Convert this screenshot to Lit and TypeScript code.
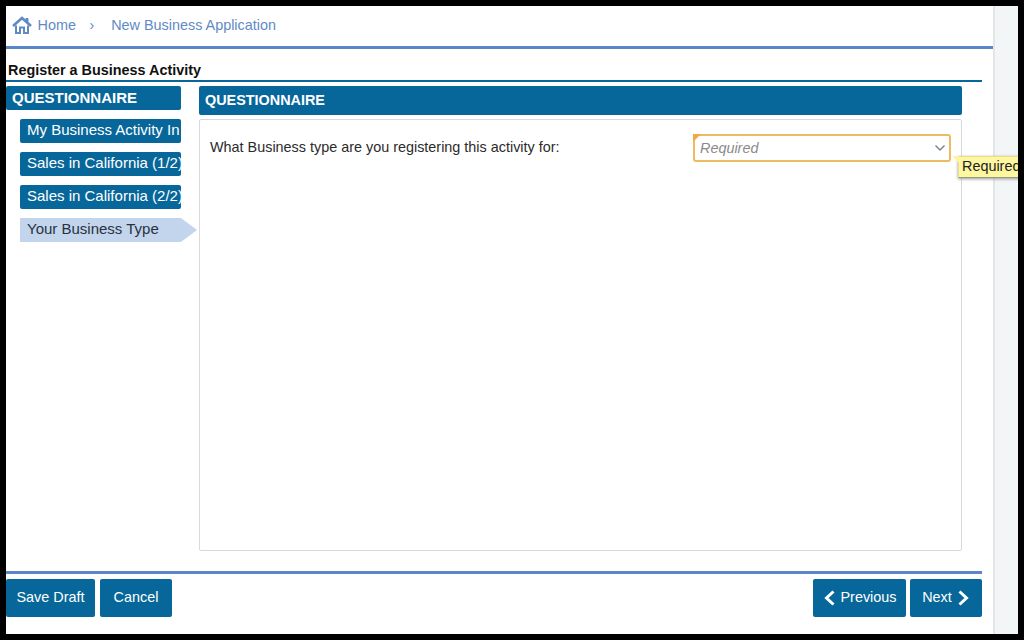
import { LitElement, html, css } from "lit";
import { customElement } from "lit/decorators.js";

@customElement("app-root")
export class AppRoot extends LitElement {
  static styles = css`
    :host { display: block; width: 1024px; height: 640px; background: #000; padding: 6px; box-sizing: border-box; font-family: "Liberation Sans", Arial, sans-serif; font-size: 14.4px; color: #222; }
    .frame { display: flex; width: 1012px; height: 628px; overflow: hidden; background: #fff; position: relative; }
    .main { width: 987px; flex: none; display: flex; flex-direction: column; }
    .scroll { flex: 1; background: #f3f6f6; border-left: 2px solid #e3e5e7; }
    .crumbs { height: 40px; display: flex; align-items: center; padding: 0 0 2px 6px; color: #5f8ac4; box-sizing: border-box; }
    .crumbs svg { width: 20px; height: 18px; margin-right: 5.5px; }
    .sep { margin: 0 17px 0 13.5px; }
    .rule { height: 2.5px; background: #5b86c8; }
    .title { margin: 12.5px 0 0 2px; height: 19px; line-height: 18px; font-weight: bold; color: #111; }
    .content { width: 976px; flex: 1; display: flex; flex-direction: column; }
    .title-rule { height: 2px; background: #07679a; margin-bottom: 4px; }
    .cols { display: flex; gap: 18px; }
    .side { width: 175px; flex: none; display: flex; flex-direction: column; }
    .side-h { height: 24px; background: #07679a; border-radius: 2px; color: #fff; font-weight: bold; font-size: 15px; line-height: 23px; padding-left: 6px; margin-bottom: 9px; }
    .nav { display: flex; flex-direction: column; gap: 9px; margin-left: 14px; font-size: 15px; }
    .item { width: 161px; height: 24px; box-sizing: border-box; background: #07679a; color: #fff; border-radius: 2px; line-height: 22px; padding-left: 7px; white-space: nowrap; overflow: hidden; }
    .item.active { width: 177px; background: #c3d4ed; color: #26333f; border-radius: 0; clip-path: polygon(0 0, 161px 0, 177px 50%, 161px 100%, 0 100%); }
    .body { width: 763px; flex: none; }
    .body-h { height: 29px; background: #07679a; border-radius: 2px; color: #fff; font-weight: bold; line-height: 28px; padding-left: 6px; box-sizing: border-box; margin-bottom: 4px; }
    .panel { height: 432px; box-sizing: border-box; border: 1px solid #d5dae0; border-radius: 2px; padding: 14px 10px 0 10px; display: flex; justify-content: space-between; }
    .q { line-height: 27px; color: #2b2b2b; }
    .select { width: 258px; height: 28px; box-sizing: border-box; border: 2px solid #edbb62; border-radius: 3px; display: flex; align-items: center; justify-content: space-between; padding: 0 3px 0 5px; font-style: italic; color: #8a8a8a; position: relative; }
    .select::before { content: ""; position: absolute; left: -2px; top: -2px; border-top: 8px solid #efa945; border-right: 8px solid transparent; }
    .select svg { width: 12px; height: 8px; }
    .tip { position: absolute; left: 952px; top: 150px; height: 22px; width: 80px; box-sizing: border-box; background: #fdf7a0; border: 1px solid #e9dc8a; border-bottom-color: #9a9a80; box-shadow: 0 1px 3px #999; color: #222; padding-left: 3px; line-height: 19px; }
    .tip::before { content: ""; position: absolute; left: -7px; top: -1px; border-top: 7px solid #fdf3a0; border-left: 7px solid transparent; }
    .foot { margin-top: 20px; }
    .foot-rule { height: 2.5px; background: #5b86c8; margin-bottom: 5px; }
    .btns { display: flex; justify-content: space-between; }
    .grp { display: flex; gap: 5px; }
    .grp.r { gap: 4px; }
    .btn { height: 38px; box-sizing: border-box; background: #07679a; color: #fff; border-radius: 2px; display: flex; align-items: center; justify-content: center; gap: 5px; padding-bottom: 2px; }
    .btn svg { width: 13px; height: 18px; margin-top: 3px; }
    .w89 { width: 89px; } .w72 { width: 72px; } .w93 { width: 93px; }
  `;

  render() {
    return html`<div class="frame">
      <div class="main">
        <div class="crumbs">
          <svg viewBox="0 0 20 18" fill="none" stroke="#5f8ac4" stroke-width="2">
            <path d="M1 10 L10 2 L19 10" stroke-width="2.6"/>
            <path d="M15 2 V6.5" stroke-width="2.8"/>
            <path d="M4 9.5 V17 H8 V11.5 H12 V17 H16 V9.5"/>
          </svg>
          <span>Home</span><span class="sep">›</span><span>New Business Application</span>
        </div>
        <div class="rule"></div>
        <div class="title">Register a Business Activity</div>
        <div class="content">
          <div class="title-rule"></div>
          <div class="cols">
            <div class="side">
              <div class="side-h">QUESTIONNAIRE</div>
              <div class="nav">
                <div class="item">My Business Activity In</div>
                <div class="item">Sales in California (1/2)</div>
                <div class="item">Sales in California (2/2)</div>
                <div class="item active">Your Business Type</div>
              </div>
            </div>
            <div class="body">
              <div class="body-h">QUESTIONNAIRE</div>
              <div class="panel">
                <div class="q">What Business type are you registering this activity for:</div>
                <div class="select">
                  <span>Required</span>
                  <svg viewBox="0 0 12 8" fill="none" stroke="#7d8790" stroke-width="1.5"><path d="M1.5 1.5 L6 6 L10.5 1.5"/></svg>
                </div>
              </div>
            </div>
          </div>
          <div class="foot">
            <div class="foot-rule"></div>
            <div class="btns">
              <div class="grp">
                <div class="btn w89">Save Draft</div>
                <div class="btn w72">Cancel</div>
              </div>
              <div class="grp r">
                <div class="btn w93">
                  <svg viewBox="0 0 13 18" fill="none" stroke="#fff" stroke-width="3"><path d="M10.5 2.5 L3.5 9 L10.5 15.5"/></svg>
                  <span>Previous</span>
                </div>
                <div class="btn w72">
                  <span>Next</span>
                  <svg viewBox="0 0 13 18" fill="none" stroke="#fff" stroke-width="3"><path d="M2.5 2.5 L9.5 9 L2.5 15.5"/></svg>
                </div>
              </div>
            </div>
          </div>
        </div>
      </div>
      <div class="scroll"></div>
      <div class="tip">Required</div>
    </div>`;
  }
}
